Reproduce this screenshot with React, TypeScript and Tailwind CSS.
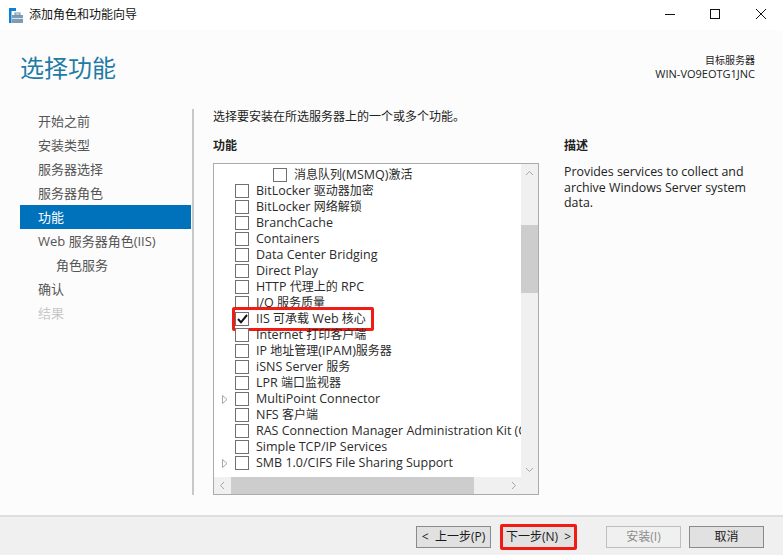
import React from 'react';

const FONT = '"Open Sans", "Noto Sans CJK SC", sans-serif';

const steps = [
  { label: '开始之前' },
  { label: '安装类型' },
  { label: '服务器选择' },
  { label: '服务器角色' },
  { label: '功能', active: true },
  { label: 'Web 服务器角色(IIS)' },
  { label: '角色服务', sub: true },
  { label: '确认' },
  { label: '结果', disabled: true },
];

const features = [
  { label: '消息队列(MSMQ)激活', indent: true },
  { label: 'BitLocker 驱动器加密' },
  { label: 'BitLocker 网络解锁' },
  { label: 'BranchCache' },
  { label: 'Containers' },
  { label: 'Data Center Bridging' },
  { label: 'Direct Play' },
  { label: 'HTTP 代理上的 RPC' },
  { label: 'I/O 服务质量' },
  { label: 'IIS 可承载 Web 核心', checked: true, marked: true },
  { label: 'Internet 打印客户端' },
  { label: 'IP 地址管理(IPAM)服务器' },
  { label: 'iSNS Server 服务' },
  { label: 'LPR 端口监视器' },
  { label: 'MultiPoint Connector', expand: true },
  { label: 'NFS 客户端' },
  { label: 'RAS Connection Manager Administration Kit (CMAK)' },
  { label: 'Simple TCP/IP Services' },
  { label: 'SMB 1.0/CIFS File Sharing Support', expand: true },
];

const Arrow = ({ d }: { d: string }) => (
  <svg width="9" height="9" viewBox="0 0 9 9" fill="none" stroke="#a6a6a6" strokeWidth="1">
    <path d={d} />
  </svg>
);

// latin runs come out narrow at 12px, the chinese ones are right at 12px
const MixedLabel = ({ text }: { text: string }) => (
  <span className="ml-[7px] text-[12.5px] text-[#2b2b2b]">
    {text.split(/([\u4e00-\u9fff]+)/).map((part, i) =>
      i % 2 === 1 ? (
        <span key={i} className="text-[12px]">
          {part}
        </span>
      ) : (
        part
      )
    )}
  </span>
);

const FeatureRow = ({ item }: { item: (typeof features)[number] }) => (
  <div className="relative flex h-4 shrink-0 items-center whitespace-nowrap">
    <div className={item.indent ? 'w-[59px] shrink-0' : 'flex w-[21px] shrink-0 justify-end pr-[7px]'}>
      {item.expand && (
        <svg width="6" height="9" viewBox="0 0 6 9" fill="none" stroke="#a6a6a6">
          <path d="M0.5 0.5 L5 4.5 L0.5 8.5 Z" />
        </svg>
      )}
    </div>
    <div className="flex h-[14px] w-[14px] shrink-0 items-center justify-center border border-[#707070] bg-white">
      {item.checked && (
        <svg width="11" height="10" viewBox="0 0 11 10" fill="none" stroke="#111" strokeWidth="2">
          <path d="M1 5 L4 8.3 L10 1" />
        </svg>
      )}
    </div>
    <MixedLabel text={item.label} />
    {item.marked && (
      <div className="absolute left-[18px] top-[-4px] h-[24px] w-[142px] rounded-[2px] border-[3px] border-[#f01c14]" />
    )}
  </div>
);

const WizardButton = ({
  label,
  disabled,
  marked,
  className,
}: {
  label: string;
  disabled?: boolean;
  marked?: boolean;
  className?: string;
}) => (
  <div className={`relative ${className ?? ''}`}>
    <button
      className={`flex h-[22px] w-[75px] items-center justify-center whitespace-pre border text-[12px] ${
        disabled ? 'border-[#bfbfbf] bg-[#f0f0f0] text-[#8c8c8c]' : 'border-[#8a8a8a] bg-[#e1e1e1] text-[#1a1a1a]'
      }`}
    >
      {label}
    </button>
    {marked && (
      <div className="absolute left-[-1px] top-[-2px] h-[26px] w-[77px] rounded-[2px] border-[3px] border-[#f01c14]" />
    )}
  </div>
);

export default function App() {
  return (
    <div className="flex h-[555px] w-[783px] flex-col overflow-hidden bg-[#fcfcfc]" style={{ fontFamily: FONT }}>
      {/* title bar */}
      <div className="flex h-[30px] shrink-0 items-center bg-white pl-[9px]">
        <svg width="14" height="15" viewBox="0 0 14 15">
          <rect x="0" y="0" width="7" height="3" fill="#0f7fd6" />
          <rect x="0" y="3" width="2.5" height="12" fill="#0f7fd6" />
          <rect x="3" y="7" width="11" height="8" fill="#7d9db5" />
          <rect x="6" y="5" width="5" height="2" fill="none" stroke="#6f8fa6" />
          <rect x="3" y="10" width="11" height="1" fill="#d8e2ea" />
        </svg>
        <span className="ml-[6px] text-[12px] text-[#111]">添加角色和功能向导</span>
        <div className="ml-auto flex items-center">
          <svg width="45" height="30" viewBox="0 0 45 30" stroke="#111" fill="none">
            <path d="M17 14.5 H27" />
          </svg>
          <svg width="45" height="30" viewBox="0 0 45 30" stroke="#111" fill="none">
            <rect x="17.5" y="9.5" width="9" height="9" />
          </svg>
          <svg width="45" height="30" viewBox="0 0 45 30" stroke="#111" fill="none">
            <path d="M18 9 L28 19 M28 9 L18 19" />
          </svg>
        </div>
      </div>

      {/* header */}
      <div className="flex h-[79px] shrink-0 items-start justify-between pl-5 pr-[28px]">
        <h1 className="mt-[18px] text-[24px] leading-[40px] font-normal text-[#1e7ba6]">选择功能</h1>
        <div className="mt-[24px] text-right text-[#222]">
          <div className="text-[10px] leading-[13px]">目标服务器</div>
          <div className="text-[11px] leading-[14px]">WIN-VO9EOTG1JNC</div>
        </div>
      </div>

      {/* body */}
      <div className="flex h-[406px] shrink-0">
        <div className="ml-5 h-[386px] w-[174px] shrink-0 border-r-2 border-[#c8c8c8]">
          {steps.map((s) => (
            <div
              key={s.label}
              className={`flex h-6 w-[171px] items-center pt-[2px] text-[13px] ${s.sub ? 'pl-9' : 'pl-[18px]'} ${
                s.active ? 'bg-[#0072bc] text-white' : s.disabled ? 'text-[#c8c8c8]' : 'text-[#555]'
              }`}
            >
              {s.label}
            </div>
          ))}
        </div>

        <div className="ml-[19px] flex w-[326px] shrink-0 flex-col">
          <div className="flex h-4 items-center whitespace-nowrap text-[12px] text-[#222]">
            选择要安装在所选服务器上的一个或多个功能。
          </div>
          <div className="mt-[14px] flex h-6 items-start text-[12px] font-semibold leading-[14px] text-[#222]">
            功能
          </div>

          <div className="flex h-[332px] flex-col border border-[#ababab] bg-white">
            <div className="flex min-h-0 flex-1">
              <div className="flex min-w-0 flex-1 flex-col overflow-hidden pt-[3px]">
                {features.map((f) => (
                  <FeatureRow key={f.label} item={f} />
                ))}
              </div>
              <div className="flex w-[17px] shrink-0 flex-col bg-[#f0f0f0]">
                <div className="flex h-[61px] justify-center pt-[5px]">
                  <Arrow d="M1 6 L4.5 2.5 L8 6" />
                </div>
                <div className="h-[68px] bg-[#cdcdcd]" />
                <div className="mt-auto flex justify-center pb-[3px]">
                  <Arrow d="M1 3 L4.5 6.5 L8 3" />
                </div>
              </div>
            </div>
            <div className="flex h-[17px] shrink-0 bg-[#f0f0f0]">
              <div className="flex w-[17px] items-center justify-center">
                <Arrow d="M6 1 L2.5 4.5 L6 8" />
              </div>
              <div className="w-[243px] bg-[#cdcdcd]" />
              <div className="ml-auto flex w-[48px] items-center justify-center pr-[2px]">
                <Arrow d="M3 1 L6.5 4.5 L3 8" />
              </div>
            </div>
          </div>
        </div>

        <div className="ml-[25px] w-[190px] shrink-0">
          <div className="mt-[30px] h-[25px] text-[12px] font-semibold leading-[14px] text-[#222]">描述</div>
          <p className="text-[12.4px] leading-[15.5px] text-[#222]">
            Provides services to collect and archive Windows Server system data.
          </p>
        </div>
      </div>

      {/* footer */}
      <div className="flex flex-1 items-center border-t-2 border-[#dfdfdf] bg-[#f0f0f0] pl-[416px] pt-[1px]">
        <WizardButton label="<  上一步(P)" />
        <WizardButton label="下一步(N)  >" marked className="ml-[10px]" />
        <WizardButton label="安装(I)" disabled className="ml-[30px]" />
        <WizardButton label="取消" className="ml-2" />
      </div>
    </div>
  );
}
